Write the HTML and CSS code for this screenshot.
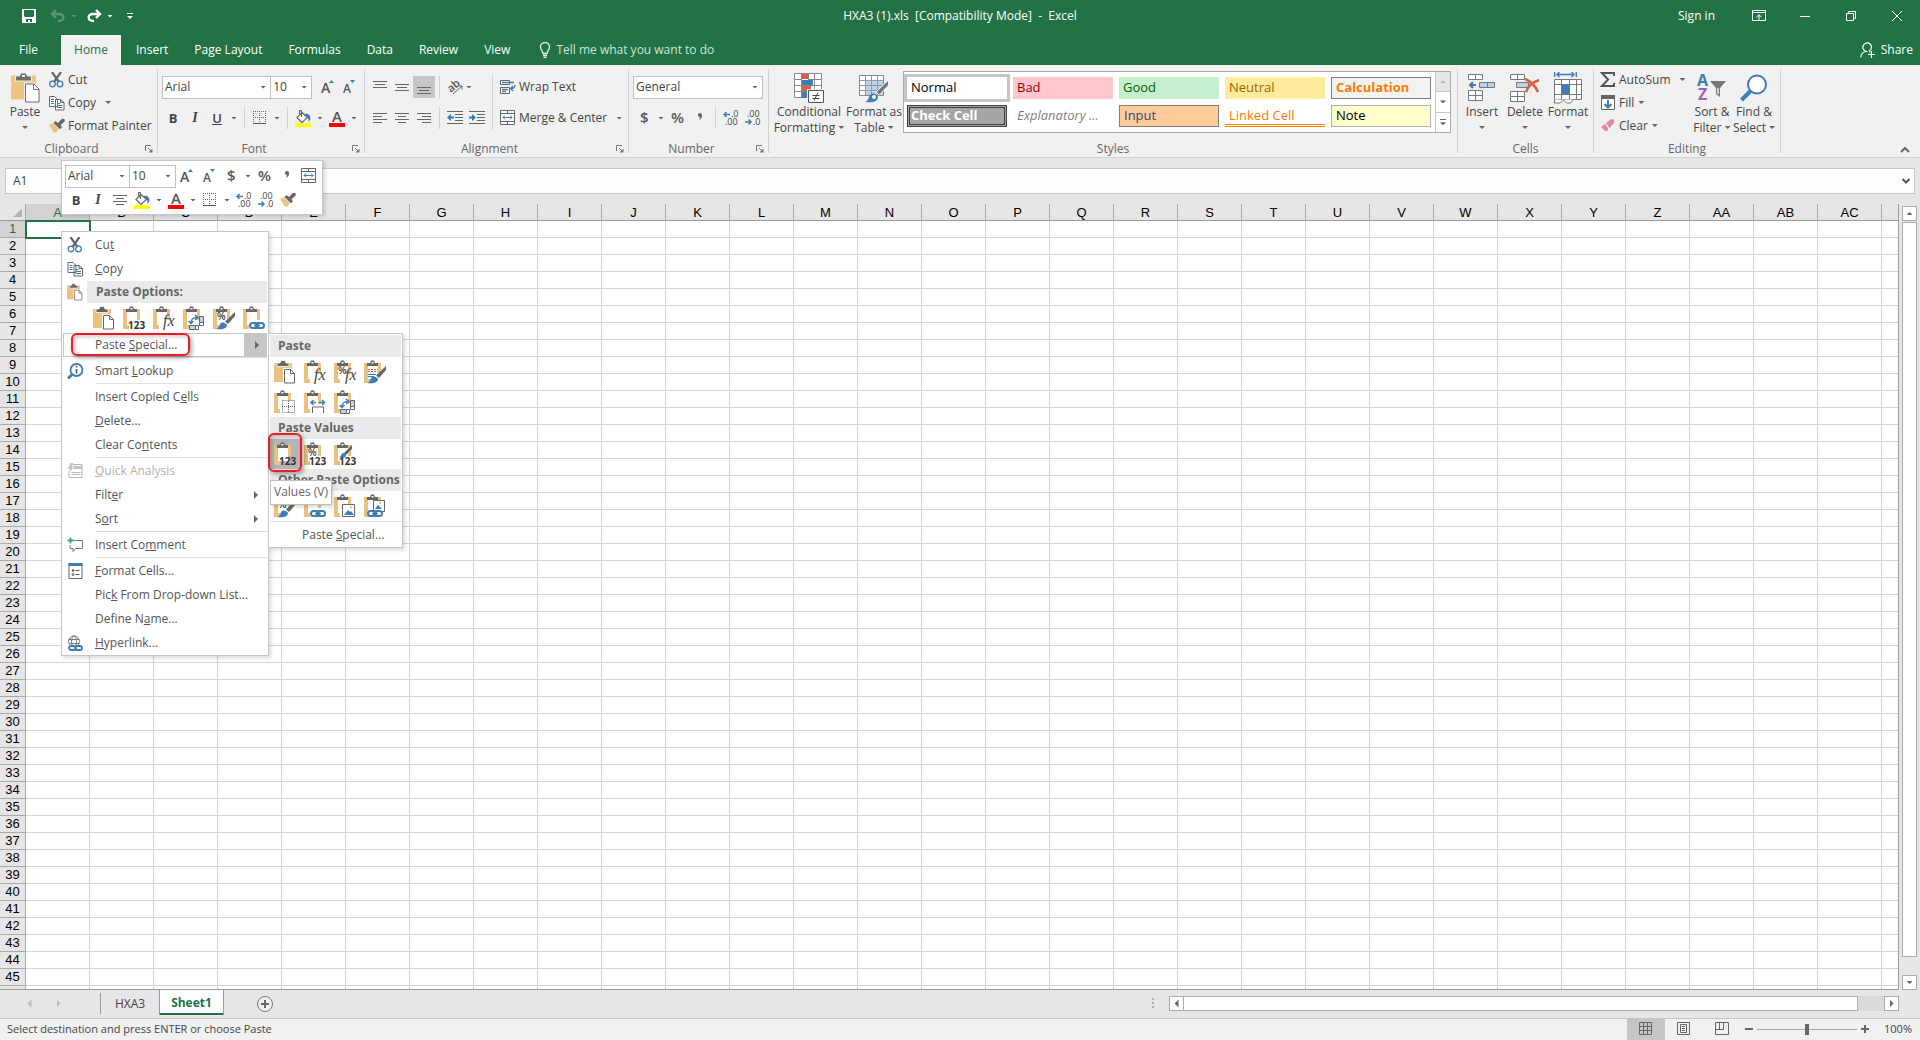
FILE: index.html
```html
<!DOCTYPE html>
<html lang="en">
  <head>
    <meta charset="utf-8">
    <title>HXA3 (1).xls [Compatibility Mode] - Excel</title>
    <link rel="stylesheet" href="styles.css">
  </head>
  <body>
    <svg class="sprite">
      <symbol id="i-save" viewBox="0 0 14 14"><path fill="#fff" fill-rule="evenodd" d="M0 0h14v14H0zM2 1v6l1 1h8l1-1V1zM4 10v3h2v-2h2v2h2v-3z"/></symbol>
      <symbol id="i-undo" viewBox="0 0 16 14"><path fill="none" stroke="#fff" stroke-width="2.4" d="M6 1L2 5l4 4M2 5h7c6 0 6 7-1 7"/></symbol>
      <symbol id="i-redo" viewBox="0 0 16 14"><path fill="none" stroke="#fff" stroke-width="2.4" d="M10 1l4 4-4 4M14 5H7c-6 0-6 7 1 7"/></symbol>
      <symbol id="i-bulb" viewBox="0 0 12 16"><path fill="none" stroke="#e5f0e9" stroke-width="1.3" d="M4 11.5C4 9 1.500 8 1.500 5a4.500 4.500 0 0 1 9 0C10.500 8 8 9 8 11.500zM4 13.500h4M4.500 15.300h3"/></symbol>
      <symbol id="i-share" viewBox="0 0 16 16"><path fill="none" stroke="#fff" stroke-width="1.2" d="M7.500 9.500a4.300 4.300 0 1 1 1.500-.4M6 9.500C3 10 1 12 .7 15.500M9 9.500l1.500.8M8 12.500h7M11.500 9v7"/></symbol>
      <symbol id="i-ribbon-opt" viewBox="0 0 14 12"><path fill="none" stroke="#fff" d="M.5.5h13v10H.5zM0 2.500h14M7 10V5M4.500 7.200L7 4.700l2.500 2.500"/></symbol>
      <symbol id="i-min" viewBox="0 0 10 10"><path stroke="#fff" d="M0 5.500h10"/></symbol>
      <symbol id="i-restore" viewBox="0 0 10 10"><path fill="none" stroke="#fff" d="M.5 2.500h7v7h-7zM2.500 2V.5h7v7H8"/></symbol>
      <symbol id="i-close" viewBox="0 0 10 10"><path stroke="#fff" d="M0 0l10 10M10 0L0 10"/></symbol>

      <symbol id="i-paste-big" viewBox="0 0 29 31">
        <path fill="#edc57f" d="M1 3h23a1 1 0 0 1 1 1v23H1a1 1 0 0 1-1-1V4a1 1 0 0 1 1-1z"/>
        <path fill="#6d6d6d" stroke="#f1f1f1" d="M4.500 8.500v-5h4L10 .5h5l1.500 3h4v5z"/><path fill="#f1f1f1" d="M11 2.500h3v2h-3z"/>
        <path fill="#fff" stroke="#f1f1f1" stroke-width="3" d="M14.500 11.500h9l4.500 5v13.500H14.500z"/>
        <path fill="#fff" stroke="#6d6d6d" d="M14.500 11.500h8.500l5 5v13H14.500zM22.500 11.500v5.500h5.500"/>
      </symbol>
      <symbol id="i-cut" viewBox="0 0 16 16"><path fill="none" stroke="#666" stroke-width="2.200" d="M3 0l7 10M12 0L5 10"/><circle cx="3.500" cy="12" r="2.800" fill="none" stroke="#3e7cb7" stroke-width="1.300"/><circle cx="11" cy="12" r="2.800" fill="none" stroke="#3e7cb7" stroke-width="1.300"/></symbol>
      <symbol id="i-copy" viewBox="0 0 16 16"><path fill="#fff" stroke="#666" d="M.5 1.500h5l3 3v7h-8zM6.500 4.500h5l3.500 3v7.500H6.500zM11.500 4.500v3H15"/><path stroke="#3e7cb7" d="M2 4.500h3M2 6.500h3M2 8.500h3M8 8.500h3M8 10.500h5.500M8 12.500h5.500"/></symbol>
      <symbol id="i-painter" viewBox="0 0 16 16"><path fill="#edc57f" d="M0 7l4-2 6 6-3 4-1-1-1 1z"/><path fill="#666" d="M4.500 5l2-2 2.500 2L13 .8 15.500 1l.3 2.200-4.300 4 1.500 2-2 2z"/></symbol>
      <symbol id="i-launch" viewBox="0 0 8 8"><path fill="none" stroke="#777" d="M.5 6V.5H6M3 3l3.500 3.500"/><path fill="#777" d="M7.500 3.500v4h-4z"/></symbol>
      <symbol id="i-grow" viewBox="0 0 14 16"><text class="svg-letter" x="0" y="14" font-size="14">A</text><path fill="#3e7cb7" d="M8 4l2.500-3L13 4z"/></symbol>
      <symbol id="i-shrink" viewBox="0 0 14 16"><text class="svg-letter" x="1" y="14" font-size="12">A</text><path fill="#3e7cb7" d="M8 1h5l-2.500 3z"/></symbol>
      <symbol id="i-borders" viewBox="0 0 14 14"><path fill="none" stroke="#666" stroke-dasharray="1 1" d="M.5 0v13M6.500 0v13M12.500 0v13M0 .5h13M0 6.500h13"/><path stroke="#555" d="M0 12.500h13"/></symbol>
      <symbol id="i-bucket" viewBox="0 0 16 17"><path fill="#fff" stroke="#666" stroke-width="1.200" d="M7 2.500l5.500 5L7 12.500 2 7.500zM6.500 7V1.500c0-1.500-2-1.500-2 0V4"/><path fill="#3e7cb7" d="M9.500 4c4-1 6 1 6 5l-2 3c0-3 0-4-2-5z"/><path fill="#ff0" d="M0 13h16v4H0z"/></symbol>
      <symbol id="i-fontcolor" viewBox="0 0 16 17"><text class="svg-letter" x="3" y="12" font-size="15">A</text><path fill="#f00" d="M0 13h16v4H0z"/></symbol>
      <symbol id="i-top" viewBox="0 0 14 14"><path stroke="#666" d="M0 1.500h14M2 4.500h10M0 7.500h14"/></symbol>
      <symbol id="i-middle" viewBox="0 0 14 14"><path stroke="#666" d="M0 4.500h14M2 7.500h10M0 10.500h14"/></symbol>
      <symbol id="i-bottom" viewBox="0 0 14 14"><path stroke="#666" d="M0 7.500h14M2 10.500h10M0 13.500h14"/></symbol>
      <symbol id="i-left" viewBox="0 0 14 14"><path stroke="#666" d="M0 2.500h14M0 5.500h9M0 8.500h14M0 11.500h9"/></symbol>
      <symbol id="i-center" viewBox="0 0 14 14"><path stroke="#666" d="M0 2.500h14M3 5.500h8M0 8.500h14M3 11.500h8"/></symbol>
      <symbol id="i-right" viewBox="0 0 14 14"><path stroke="#666" d="M0 2.500h14M5 5.500h9M0 8.500h14M5 11.500h9"/></symbol>
      <symbol id="i-orient" viewBox="0 0 16 16"><text class="svg-letter" x="1" y="12" font-size="11" transform="rotate(-42 5 9)">ab</text><path fill="none" stroke="#666" d="M6 15l9-8M11.500 7H15v3.500"/></symbol>
      <symbol id="i-outdent" viewBox="0 0 16 14"><path stroke="#666" d="M0 .5h16M8 3.500h8M8 6.500h8M8 9.500h8M0 12.500h16"/><path fill="#3e7cb7" d="M0 6.500L4 3v2.500h3v2H4V10z"/></symbol>
      <symbol id="i-indent" viewBox="0 0 16 14"><path stroke="#666" d="M0 .5h16M8 3.500h8M8 6.500h8M8 9.500h8M0 12.500h16"/><path fill="#3e7cb7" d="M7 6.500L3 3v2.500H0v2h3V10z"/></symbol>
      <symbol id="i-wrap" viewBox="0 0 16 16"><path fill="#fff" stroke="#666" d="M.5 1.500h9v4h-9zM.5 8.500h9v6h-9z"/><path fill="none" stroke="#3e7cb7" stroke-width="1.300" d="M2 3.500h12M2 10.500h6M2 12.500h4M15 6c0 3-1 3.500-4 3.500M13 7l-2.500 2.500L13 12"/></symbol>
      <symbol id="i-merge" viewBox="0 0 16 16"><path fill="#fff" stroke="#666" d="M.5.5h14v14H.5zM0 3.500h15M0 11.500h15M7.500 0v4M7.500 11v4"/><path fill="none" stroke="#3e7cb7" d="M3 7.500h9M5 5.500l-2 2 2 2M10 5.500l2 2-2 2"/></symbol>
      <symbol id="i-dollar" viewBox="0 0 14 18"><text class="svg-letter" x="3" y="14" font-size="15">$</text></symbol>
      <symbol id="i-percent" viewBox="0 0 14 18"><text class="svg-letter" x="0" y="14" font-size="15">%</text></symbol>
      <symbol id="i-comma" viewBox="0 0 8 16"><path fill="#666" d="M4 3a2 2 0 0 1 2 2c0 3-1 4-3 5 .8-1.200 1-2 .8-3A2 2 0 0 1 4 3z"/></symbol>
      <symbol id="i-incdec" viewBox="0 0 16 16"><path fill="none" stroke="#3e7cb7" stroke-width="1.500" d="M1 4.500h6M3.500 2L1 4.500 3.500 7"/><text class="svg-num" x="8" y="7">.0</text><text class="svg-num" x="2" y="15">.00</text></symbol>
      <symbol id="i-decdec" viewBox="0 0 16 16"><path fill="none" stroke="#3e7cb7" stroke-width="1.500" d="M0 12h6M3.500 9.500L6 12l-2.500 2.500"/><text class="svg-num" x="2" y="7">.00</text><text class="svg-num" x="8" y="15">.0</text></symbol>

      <symbol id="i-cond" viewBox="0 0 30 30">
        <path fill="#fff" stroke="#888" d="M.5.500h27v24H.5z"/><path fill="#d9603f" d="M8 1h6v5H8zM8 13h9v5H8z"/><path fill="#3e7cb7" d="M8 7h11v5H8zM8 19h5v6H8z"/>
        <path fill="none" stroke="#888" d="M7.500 1v24M.5 6.500h7M.5 12.500h27M.5 18.500h27M14 6.500h13M20.500 1v18M14.500 1v5"/>
        <path fill="#fff" stroke="#f1f1f1" stroke-width="3" d="M14.500 17.500h15v12h-15z"/>
        <path fill="#fff" stroke="#555" d="M14.500 17.500h15v12h-15z"/><path stroke="#444" d="M18.500 22.500h7M18.500 25.500h7M24 19.500l-4 8"/>
      </symbol>
      <symbol id="i-fmttable" viewBox="0 0 30 30">
        <path fill="#fff" stroke="#888" d="M.5 2.500h24v20H.5z"/><path fill="#bcd2ea" d="M7 8h17v14H7z"/><path fill="none" stroke="#999" d="M6.500 3v19M12.500 3v19M18.500 3v19M1 7.500h23M1 12.500h23M1 17.500h23"/>
        <path fill="#777" stroke="#f1f1f1" d="M29.500 7v5l-9 10-3.500-3z"/><path fill="#3e7cb7" d="M6 29c4-1 3-5 5-7 3-3 7-1 8 2 0 5-7 6-13 5z"/><circle cx="15" cy="24" r="2" fill="#fff"/>
      </symbol>
      <symbol id="i-insert" viewBox="0 0 28 30">
        <path fill="#fff" stroke="#777" d="M.5 1.500h14v5H.5zM7.500 1.500v5M.5 17.500h14v10H.5zM7.500 17.500v10M.5 22.500h14"/><path fill="#bcd2ea" stroke="#777" d="M11.500 9.500h15v5h-15zM19.500 9.500v5"/><path fill="none" stroke="#3e7cb7" stroke-width="2" d="M2 12h6M5 9l-3 3 3 3"/>
      </symbol>
      <symbol id="i-delete" viewBox="0 0 30 30">
        <path fill="#fff" stroke="#777" d="M.5 1.500h14v5H.5zM7.500 1.500v5M.5 18.500h14v10H.5zM7.500 18.500v10M.5 23.500h14"/><path fill="#bcd2ea" stroke="#777" d="M6.500 9.500h12v5h-12z"/><path fill="none" stroke="#d9603f" stroke-width="2.600" d="M15 6c5 2 10 6 13 13M29 7c-6 2-11 6-13 12"/>
      </symbol>
      <symbol id="i-format" viewBox="0 0 28 32">
        <path fill="none" stroke="#3e7cb7" stroke-width="1.400" d="M.7 0v5M22.300 0v5M3 2.500h17M5.500 0L3 2.500 5.500 5M17.500 0L20 2.500 17.500 5"/><path fill="#fff" stroke="#777" d="M.5 7.500h27v20H.5zM7.500 7.500v20M15.500 7.500v20M22.500 7.500v20M.5 12.500h27M.5 22.500h27"/><path fill="#3e7cb7" d="M8 13h7v9H8z"/><path fill="#fff" stroke="#777" d="M.5 27.500v3.500h6l3-3 3 3h4l3-3.500"/>
      </symbol>
      <symbol id="i-sigma" viewBox="0 0 16 16"><path fill="none" stroke="#555" stroke-width="2" d="M14 4V1H2l6 6.500L2 14h12v-3"/></symbol>
      <symbol id="i-fill" viewBox="0 0 16 16"><path fill="#fff" stroke="#666" d="M1.500.500h13v14h-13z"/><path fill="#666" d="M1 0h14v4H1z"/><path fill="none" stroke="#3e7cb7" stroke-width="2" d="M8 5v7M4.500 9L8 12.500 11.500 9"/></symbol>
      <symbol id="i-clear" viewBox="0 0 16 16"><path fill="#e8879a" d="M6 5l5-4 3 .5V5l-4.500 5zM5 6l3.500 5-1.500 2H5L1 9z"/></symbol>
      <symbol id="i-sort" viewBox="0 0 30 30"><text x="0" y="13" font-size="16" font-weight="700" fill="#3e7cb7">A</text><text x="1" y="27" font-size="16" font-weight="700" fill="#9b62b8">Z</text><path fill="#777" d="M13 8h16l-6 7v9l-4-3v-6z"/><path stroke="#eee" stroke-width="1.500" d="M21 15v6"/></symbol>
      <symbol id="i-find" viewBox="0 0 28 28"><path stroke="#3e7cb7" stroke-width="4" d="M1.500 26l9-9"/><circle cx="17" cy="10.500" r="9" fill="#fff" stroke="#3e7cb7" stroke-width="2"/></symbol>
      <symbol id="i-chev-up" viewBox="0 0 10 6"><path fill="none" stroke="#666" stroke-width="2" d="M1 5l4-4 4 4"/></symbol>
      <symbol id="i-chev-down" viewBox="0 0 10 6"><path fill="none" stroke="#555" stroke-width="2" d="M1.500 1L5 4.500 8.500 1"/></symbol>

      <!-- paste option icons share one clipboard -->
      <symbol id="clip" viewBox="0 0 22 24"><path fill="#fff" d="M4 5h10v14H4z"/><path fill="#e9c282" d="M0 3h5v3H4v13h2v4H0zM12 3h5v11h-3V6h-2z"/><path fill="#666" d="M3 6V3h3l1-2.500h3L11 3h3v3z"/><path fill="#fff" d="M7.500 2h2v1.500h-2z"/></symbol>
      <symbol id="p-paste" viewBox="0 0 22 24"><path fill="#e9c282" d="M0 3h18v19H0z"/><path fill="#666" stroke="#fff" stroke-width=".8" d="M3 6.500V3h3l1-2.500h4L12 3h3v3.500z"/><path fill="#fff" d="M9 8h13v16H9z"/><path fill="#fff" stroke="#666" d="M10.500 9.500h6l4 4v9.500h-10zM16.500 9.500v4h4"/></symbol>
      <symbol id="p-values" viewBox="0 0 22 24"><use href="#clip"/><text class="svg-123" x="5" y="23">123</text></symbol>
      <symbol id="p-fx" viewBox="0 0 22 24"><use href="#clip"/><text class="svg-fx" x="10" y="20">fx</text></symbol>
      <symbol id="p-pfx" viewBox="0 0 22 24"><use href="#clip"/><text class="svg-pct" x="4" y="14">%</text><text class="svg-fx" x="11" y="20">fx</text></symbol>
      <symbol id="p-transpose" viewBox="0 0 22 24"><use href="#clip"/><path fill="#bcd2ea" stroke="#666" d="M16.500 10.500h4v6h-4zM6.500 19.500h6v4h-6z"/><path fill="#fff" stroke="#666" d="M16.500 16.500h4v3h-4zM12.500 19.500h3v4h-3z"/><path fill="none" stroke="#3e7cb7" stroke-width="1.500" d="M8 17.500c0-5 2-6 6-6M12 9l3 2.500-3 2.500M5.500 15L8 17.500l2.500-2.500"/></symbol>
      <symbol id="brush" viewBox="0 0 22 24"><path fill="#666" d="M22 6v4l-7 8-3-2.500z"/><path fill="#3e7cb7" d="M3 23c3 0 3-4 5-6 2-1 5 0 6 2 0 4-6 5-11 4z"/></symbol>
      <symbol id="p-format" viewBox="0 0 22 24"><use href="#clip"/><text class="svg-pct" x="4" y="14">%</text><use href="#brush"/></symbol>
      <symbol id="link" viewBox="0 0 22 24"><rect x="7" y="17" width="8" height="5" rx="2.500" fill="#fff" stroke="#3e7cb7" stroke-width="2"/><rect x="13" y="17" width="8" height="5" rx="2.500" fill="none" stroke="#3e7cb7" stroke-width="2"/><path stroke="#3e7cb7" stroke-width="1.500" d="M11 19.500h6"/></symbol>
      <symbol id="p-link" viewBox="0 0 22 24"><use href="#clip"/><use href="#link"/></symbol>
      <symbol id="p-source" viewBox="0 0 22 24"><use href="#clip"/><path stroke="#d9603f" stroke-dasharray="2 1" d="M4 9.500h10M4 11.500h10"/><path stroke="#3e7cb7" d="M4 14.500h8M4 16.500h6"/><use href="#brush"/></symbol>
      <symbol id="p-noborder" viewBox="0 0 22 24"><use href="#clip"/><path fill="#fff" stroke="#666" stroke-dasharray="1 1" d="M8.500 10.500h12v12h-12zM14.500 11v12M8 16.500h13"/></symbol>
      <symbol id="p-width" viewBox="0 0 22 24"><use href="#clip"/><path fill="#fff" stroke="#666" d="M8.500 23v-6h11v6"/><path fill="none" stroke="#3e7cb7" stroke-width="1.500" d="M7 12.500h5M9.500 10L7 12.500 9.500 15M15 12.500h5M18 10l2.500 2.500L18 15"/></symbol>
      <symbol id="p-numvalues" viewBox="0 0 22 24"><use href="#clip"/><text class="svg-pct" x="4" y="14">%</text><text class="svg-123" x="5" y="23">123</text></symbol>
      <symbol id="p-fmtvalues" viewBox="0 0 22 24"><use href="#clip"/><path fill="#666" d="M18 3v4l-6 6-2-2z"/><path fill="#3e7cb7" d="M5 15c2 0 2-3 4-4 2 0 3 1 3 3-1 2-4 2-7 1z"/><text class="svg-123" x="5" y="23">123</text></symbol>
      <symbol id="p-picture" viewBox="0 0 22 24"><use href="#clip"/><path fill="#fff" stroke="#666" d="M8.500 10.500h12v12h-12z"/><path fill="#3e7cb7" d="M10 21l4-5 2 2 1-1 3 4z"/><path fill="#edc57f" d="M16 12h2v2h-2z"/></symbol>
      <symbol id="p-linkpic" viewBox="0 0 22 24"><use href="#clip"/><path fill="#fff" stroke="#666" d="M9.500 6.500h11v11h-11z"/><path fill="#edc57f" d="M15 8h2v2h-2z"/><path fill="#3e7cb7" d="M11 15l3-4 4 4z"/><g transform="translate(-3 0)"><use href="#link"/></g></symbol>

      <symbol id="i-lookup" viewBox="0 0 17 17"><circle cx="9.500" cy="7" r="6" fill="#fff" stroke="#3e7cb7" stroke-width="1.800"/><path stroke="#3e7cb7" stroke-width="2.600" d="M1 15.500l4-4"/><path stroke="#555" stroke-width="1.600" d="M9.500 3v1.600M9.500 6v4.500"/></symbol>
      <symbol id="i-quick" viewBox="0 0 16 16"><path fill="#fff" stroke="#b5b5b5" d="M5.500 1.500h9v13h-13v-6"/><path fill="#c4c4c4" d="M5 3h10v3H5zM3 0L0 6h3l-2 4 6-6H4l2-4z"/><path stroke="#b5b5b5" d="M4 9.500h9M4 11.500h9"/></symbol>
      <symbol id="i-comment" viewBox="0 0 16 16"><path fill="none" stroke="#777" d="M6 3.500h9v8H8l-2.500 3v-3h-3V8"/><path stroke="#4e9a7c" stroke-width="1.800" d="M0 3.500h6M3 .5v6"/></symbol>
      <symbol id="i-cells" viewBox="0 0 16 16"><path fill="#fff" stroke="#666" d="M1.500.500h13v15h-13z"/><path fill="#3e7cb7" d="M1 0h14v3H1z"/><path fill="none" stroke="#555" d="M8 7.500h4M8 11.500h4"/><circle cx="5.500" cy="7.500" r="1.300" fill="#555"/><circle cx="5.500" cy="11.500" r="1" fill="none" stroke="#555"/></symbol>
      <symbol id="i-hyper" viewBox="0 0 17 17"><g fill="none" stroke="#777"><circle cx="7" cy="6.500" r="5.500"/><ellipse cx="7" cy="6.500" rx="2.500" ry="5.500"/><path d="M2 4.500h10M2 8.500h10"/></g><path fill="#fff" d="M2 10h14v7H2z"/><g fill="none" stroke="#3e7cb7" stroke-width="1.800"><rect x="2" y="11" width="7" height="4" rx="2"/><rect x="8" y="11" width="7" height="4" rx="2"/></g></symbol>
      <symbol id="i-plus" viewBox="0 0 18 18"><circle cx="9" cy="9" r="7.500" fill="#eee" stroke="#777"/><path stroke="#666" stroke-width="2" d="M5 9h8M9 5v8"/></symbol>
      <symbol id="i-v-normal" viewBox="0 0 14 14"><path fill="none" stroke="#666" d="M.5.500h12v12H.5zM4.500.500v12M8.500.500v12M.5 4.500h12M.5 8.500h12"/></symbol>
      <symbol id="i-v-page" viewBox="0 0 14 14"><path fill="none" stroke="#666" d="M.5.500h12v12H.5zM3.500 2.500h6v8h-6zM5 4.500h3M5 6.500h3M5 8.500h3"/></symbol>
      <symbol id="i-v-break" viewBox="0 0 14 14"><path fill="none" stroke="#666" d="M.5.500h13v12H.5zM4.500.500v7M8.500.500v7M.5 7.500h8"/></symbol>
    </svg>

    <header class="titlebar">
      <div class="quick">
        <button aria-label="Save"><svg width="14" height="14"><use href="#i-save"/></svg></button>
        <button class="faded" aria-label="Undo"><svg width="16" height="14"><use href="#i-undo"/></svg><i class="caret"></i></button>
        <button aria-label="Redo"><svg width="16" height="14"><use href="#i-redo"/></svg><i class="caret"></i></button>
        <button class="customize" aria-label="Customize"><i class="caret"></i></button>
      </div>
      <div class="doc-title">HXA3 (1).xls  [Compatibility Mode]  -  Excel</div>
      <div class="window-tools">
        <a class="signin" href="#">Sign in</a>
        <button aria-label="Ribbon options"><svg width="14" height="12"><use href="#i-ribbon-opt"/></svg></button>
        <button aria-label="Minimize"><svg width="10" height="10"><use href="#i-min"/></svg></button>
        <button aria-label="Restore"><svg width="10" height="10"><use href="#i-restore"/></svg></button>
        <button aria-label="Close"><svg width="10" height="10"><use href="#i-close"/></svg></button>
      </div>
    </header>

    <nav class="tabs">
      <button class="file">File</button>
      <button class="active">Home</button>
      <button>Insert</button>
      <button>Page Layout</button>
      <button>Formulas</button>
      <button>Data</button>
      <button>Review</button>
      <button>View</button>
      <button class="tell"><svg width="12" height="16"><use href="#i-bulb"/></svg>Tell me what you want to do</button>
      <button class="share"><svg width="16" height="16"><use href="#i-share"/></svg>Share</button>
    </nav>

    <section class="ribbon">
      <div class="group clipboard">
        <div class="group-body">
          <button class="big paste"><svg width="29" height="31"><use href="#i-paste-big"/></svg><span>Paste</span><i class="caret"></i></button>
          <div class="stack">
            <button class="line"><svg width="16" height="16"><use href="#i-cut"/></svg>Cut</button>
            <button class="line"><svg width="16" height="16"><use href="#i-copy"/></svg>Copy<i class="caret far"></i></button>
            <button class="line"><svg width="16" height="16"><use href="#i-painter"/></svg>Format Painter</button>
          </div>
        </div>
        <div class="group-foot"><span>Clipboard</span><button aria-label="Clipboard settings"><svg width="8" height="8"><use href="#i-launch"/></svg></button></div>
      </div>

      <div class="group font">
        <div class="group-body rows">
          <div class="row">
            <label class="combo face"><select aria-label="Font"><option>Arial</option></select><i class="caret"></i></label>
            <label class="combo size"><select aria-label="Font size"><option>10</option></select><i class="caret"></i></label>
            <button class="tool" aria-label="Increase font size"><svg width="14" height="16"><use href="#i-grow"/></svg></button>
            <button class="tool" aria-label="Decrease font size"><svg width="14" height="16"><use href="#i-shrink"/></svg></button>
          </div>
          <div class="row">
            <button class="tool bold">B</button>
            <button class="tool italic">I</button>
            <button class="tool underline">U</button><i class="caret slot"></i>
            <i class="sep"></i>
            <button class="tool" aria-label="Borders"><svg width="14" height="14"><use href="#i-borders"/></svg></button><i class="caret slot"></i>
            <i class="sep"></i>
            <button class="tool" aria-label="Fill color"><svg width="16" height="17"><use href="#i-bucket"/></svg></button><i class="caret slot"></i>
            <button class="tool" aria-label="Font color"><svg width="16" height="17"><use href="#i-fontcolor"/></svg></button><i class="caret slot"></i>
          </div>
        </div>
        <div class="group-foot"><span>Font</span><button aria-label="Font settings"><svg width="8" height="8"><use href="#i-launch"/></svg></button></div>
      </div>

      <div class="group alignment">
        <div class="group-body">
          <div class="rows">
            <div class="row">
              <button class="tool" aria-label="Top align"><svg width="14" height="14"><use href="#i-top"/></svg></button>
              <button class="tool" aria-label="Middle align"><svg width="14" height="14"><use href="#i-middle"/></svg></button>
              <button class="tool on" aria-label="Bottom align"><svg width="14" height="14"><use href="#i-bottom"/></svg></button>
              <i class="sep"></i>
              <button class="tool" aria-label="Orientation"><svg width="16" height="16"><use href="#i-orient"/></svg></button><i class="caret"></i>
            </div>
            <div class="row">
              <button class="tool" aria-label="Align left"><svg width="14" height="14"><use href="#i-left"/></svg></button>
              <button class="tool" aria-label="Center"><svg width="14" height="14"><use href="#i-center"/></svg></button>
              <button class="tool" aria-label="Align right"><svg width="14" height="14"><use href="#i-right"/></svg></button>
              <i class="sep"></i>
              <button class="tool" aria-label="Decrease indent"><svg width="16" height="14"><use href="#i-outdent"/></svg></button>
              <button class="tool" aria-label="Increase indent"><svg width="16" height="14"><use href="#i-indent"/></svg></button>
            </div>
          </div>
          <i class="sep tall"></i>
          <div class="rows wraps">
            <button class="line"><svg width="16" height="16"><use href="#i-wrap"/></svg>Wrap Text</button>
            <button class="line"><svg width="16" height="16"><use href="#i-merge"/></svg>Merge &amp; Center<i class="caret far"></i></button>
          </div>
        </div>
        <div class="group-foot"><span>Alignment</span><button aria-label="Alignment settings"><svg width="8" height="8"><use href="#i-launch"/></svg></button></div>
      </div>

      <div class="group number">
        <div class="group-body rows">
          <div class="row">
            <label class="combo format"><select aria-label="Number format"><option>General</option></select><i class="caret"></i></label>
          </div>
          <div class="row">
            <button class="tool" aria-label="Currency"><svg width="14" height="18"><use href="#i-dollar"/></svg></button><i class="caret slot"></i>
            <button class="tool" aria-label="Percent"><svg width="14" height="18"><use href="#i-percent"/></svg></button>
            <button class="tool" aria-label="Comma style"><svg width="8" height="16"><use href="#i-comma"/></svg></button>
            <i class="sep"></i>
            <button class="tool" aria-label="Increase decimal"><svg width="16" height="16"><use href="#i-incdec"/></svg></button>
            <button class="tool" aria-label="Decrease decimal"><svg width="16" height="16"><use href="#i-decdec"/></svg></button>
          </div>
        </div>
        <div class="group-foot"><span>Number</span><button aria-label="Number settings"><svg width="8" height="8"><use href="#i-launch"/></svg></button></div>
      </div>

      <div class="group styles">
        <div class="group-body">
          <button class="big cond"><svg width="30" height="30"><use href="#i-cond"/></svg><span>Conditional<br>Formatting <i class="caret"></i></span></button>
          <button class="big astable"><svg width="30" height="30"><use href="#i-fmttable"/></svg><span>Format as<br>Table <i class="caret"></i></span></button>
          <div class="gallery">
            <div class="swatches">
              <button class="normal">Normal</button>
              <button class="bad">Bad</button>
              <button class="good">Good</button>
              <button class="neutral">Neutral</button>
              <button class="calc">Calculation</button>
              <button class="check">Check Cell</button>
              <button class="expl">Explanatory ...</button>
              <button class="input">Input</button>
              <button class="linked">Linked Cell</button>
              <button class="note">Note</button>
            </div>
            <div class="gallery-nav">
              <button class="off" aria-label="Previous styles"><i class="caret up"></i></button>
              <button aria-label="Next styles"><i class="caret"></i></button>
              <button class="more" aria-label="More styles"><i class="caret"></i></button>
            </div>
          </div>
        </div>
        <div class="group-foot"><span>Styles</span></div>
      </div>

      <div class="group cells">
        <div class="group-body">
          <button class="big"><svg width="28" height="30"><use href="#i-insert"/></svg><span>Insert</span><i class="caret"></i></button>
          <button class="big"><svg width="30" height="30"><use href="#i-delete"/></svg><span>Delete</span><i class="caret"></i></button>
          <button class="big"><svg width="28" height="32"><use href="#i-format"/></svg><span>Format</span><i class="caret"></i></button>
        </div>
        <div class="group-foot"><span>Cells</span></div>
      </div>

      <div class="group editing">
        <div class="group-body">
          <div class="stack">
            <button class="line"><svg width="16" height="16"><use href="#i-sigma"/></svg>AutoSum<i class="caret far"></i></button>
            <button class="line"><svg width="16" height="16"><use href="#i-fill"/></svg>Fill<i class="caret"></i></button>
            <button class="line"><svg width="16" height="16"><use href="#i-clear"/></svg>Clear<i class="caret"></i></button>
          </div>
          <button class="big"><svg width="30" height="30"><use href="#i-sort"/></svg><span>Sort &amp;<br>Filter <i class="caret"></i></span></button>
          <button class="big"><svg width="28" height="28"><use href="#i-find"/></svg><span>Find &amp;<br>Select <i class="caret"></i></span></button>
        </div>
        <div class="group-foot"><span>Editing</span></div>
      </div>
      <button class="collapse" aria-label="Collapse ribbon"><svg width="10" height="6"><use href="#i-chev-up"/></svg></button>
    </section>

    <div class="formula-bar">
      <input class="name-box" aria-label="Name box" value="A1">
      <div class="formula"><input aria-label="Formula"><svg width="10" height="6"><use href="#i-chev-down"/></svg></div>
    </div>

    <main class="workspace">
      <div class="grid-view"><table class="grid"></table></div>
      <div class="vscroll">
        <button aria-label="Scroll up"><i class="caret up"></i></button>
        <div class="thumb"></div>
        <button aria-label="Scroll down"><i class="caret"></i></button>
      </div>
    </main>

    <div class="sheet-bar">
      <button class="nav" aria-label="Previous sheet"><i class="arrow left"></i></button>
      <button class="nav" aria-label="Next sheet"><i class="arrow"></i></button>
      <button class="sheet first">HXA3</button>
      <button class="sheet active">Sheet1</button>
      <button class="add" aria-label="New sheet"><svg width="18" height="18"><use href="#i-plus"/></svg></button>
      <i class="grip"></i>
      <div class="hscroll">
        <button aria-label="Scroll left"><i class="arrow left"></i></button>
        <div class="thumb"></div>
        <button aria-label="Scroll right"><i class="arrow"></i></button>
      </div>
    </div>

    <footer class="status">
      <span class="message">Select destination and press ENTER or choose Paste</span>
      <button class="view on" aria-label="Normal view"><svg width="14" height="14"><use href="#i-v-normal"/></svg></button>
      <button class="view" aria-label="Page layout"><svg width="14" height="14"><use href="#i-v-page"/></svg></button>
      <button class="view" aria-label="Page break preview"><svg width="14" height="14"><use href="#i-v-break"/></svg></button>
      <button class="zoom-step minus" aria-label="Zoom out"></button>
      <input class="zoom" type="range" min="0" max="100" value="50" aria-label="Zoom">
      <button class="zoom-step plus" aria-label="Zoom in"></button>
      <span class="zoom-value">100%</span>
    </footer>

    <div class="mini-toolbar">
      <div class="row">
        <label class="combo mini-face"><select aria-label="Font"><option>Arial</option></select><i class="caret"></i></label>
        <label class="combo mini-size"><select aria-label="Font size"><option>10</option></select><i class="caret"></i></label>
        <button class="tool" aria-label="Increase font size"><svg width="14" height="16"><use href="#i-grow"/></svg></button>
        <button class="tool" aria-label="Decrease font size"><svg width="14" height="16"><use href="#i-shrink"/></svg></button>
        <button class="tool" aria-label="Currency"><svg width="14" height="18"><use href="#i-dollar"/></svg></button><i class="caret slot"></i>
        <button class="tool" aria-label="Percent"><svg width="14" height="18"><use href="#i-percent"/></svg></button>
        <button class="tool" aria-label="Comma style"><svg width="8" height="16"><use href="#i-comma"/></svg></button>
        <button class="tool" aria-label="Merge"><svg width="16" height="16"><use href="#i-merge"/></svg></button>
      </div>
      <div class="row">
        <button class="tool bold">B</button>
        <button class="tool italic">I</button>
        <button class="tool" aria-label="Center"><svg width="14" height="14"><use href="#i-center"/></svg></button>
        <button class="tool" aria-label="Fill color"><svg width="16" height="17"><use href="#i-bucket"/></svg></button><i class="caret slot"></i>
        <button class="tool" aria-label="Font color"><svg width="16" height="17"><use href="#i-fontcolor"/></svg></button><i class="caret slot"></i>
        <button class="tool" aria-label="Borders"><svg width="14" height="14"><use href="#i-borders"/></svg></button><i class="caret slot"></i>
        <button class="tool" aria-label="Increase decimal"><svg width="16" height="16"><use href="#i-incdec"/></svg></button>
        <button class="tool" aria-label="Decrease decimal"><svg width="16" height="16"><use href="#i-decdec"/></svg></button>
        <button class="tool" aria-label="Format painter"><svg width="16" height="16"><use href="#i-painter"/></svg></button>
      </div>
    </div>

    <div class="menu context-menu">
      <button class="item"><svg width="16" height="16"><use href="#i-cut"/></svg><span>Cu<u>t</u></span></button>
      <button class="item"><svg width="16" height="16"><use href="#i-copy"/></svg><span><u>C</u>opy</span></button>
      <div class="heading with-icon"><svg width="16" height="18"><use href="#p-paste"/></svg><span>Paste Options:</span></div>
      <div class="paste-row">
        <button aria-label="Paste"><svg width="22" height="24"><use href="#p-paste"/></svg></button>
        <button aria-label="Values"><svg width="22" height="24"><use href="#p-values"/></svg></button>
        <button aria-label="Formulas"><svg width="22" height="24"><use href="#p-fx"/></svg></button>
        <button aria-label="Transpose"><svg width="22" height="24"><use href="#p-transpose"/></svg></button>
        <button aria-label="Formatting"><svg width="22" height="24"><use href="#p-format"/></svg></button>
        <button aria-label="Paste link"><svg width="22" height="24"><use href="#p-link"/></svg></button>
      </div>
      <div class="has-submenu">
        <button class="item open"><span>Paste <u>S</u>pecial...</span><i class="arrow"></i></button>
        <i class="marker"></i>
        <div class="menu submenu">
          <div class="heading">Paste</div>
          <div class="paste-row">
            <button aria-label="Paste"><svg width="22" height="24"><use href="#p-paste"/></svg></button>
            <button aria-label="Formulas"><svg width="22" height="24"><use href="#p-fx"/></svg></button>
            <button aria-label="Formulas and number formatting"><svg width="22" height="24"><use href="#p-pfx"/></svg></button>
            <button aria-label="Keep source formatting"><svg width="22" height="24"><use href="#p-source"/></svg></button>
            <button aria-label="No borders"><svg width="22" height="24"><use href="#p-noborder"/></svg></button>
            <button aria-label="Keep column widths"><svg width="22" height="24"><use href="#p-width"/></svg></button>
            <button aria-label="Transpose"><svg width="22" height="24"><use href="#p-transpose"/></svg></button>
          </div>
          <div class="heading">Paste Values</div>
          <div class="paste-row">
            <button class="picked" aria-label="Values"><svg width="22" height="24"><use href="#p-values"/></svg><i class="marker"></i><span class="tooltip">Values (V)</span></button>
            <button aria-label="Values and number formatting"><svg width="22" height="24"><use href="#p-numvalues"/></svg></button>
            <button aria-label="Values and source formatting"><svg width="22" height="24"><use href="#p-fmtvalues"/></svg></button>
          </div>
          <div class="heading">Other Paste Options</div>
          <div class="paste-row">
            <button aria-label="Formatting"><svg width="22" height="24"><use href="#p-format"/></svg></button>
            <button aria-label="Paste link"><svg width="22" height="24"><use href="#p-link"/></svg></button>
            <button aria-label="Picture"><svg width="22" height="24"><use href="#p-picture"/></svg></button>
            <button aria-label="Linked picture"><svg width="22" height="24"><use href="#p-linkpic"/></svg></button>
          </div>
          <hr>
          <button class="item"><span>Paste <u>S</u>pecial...</span></button>
        </div>
      </div>
      <hr>
      <button class="item"><svg width="17" height="17"><use href="#i-lookup"/></svg><span>Smart <u>L</u>ookup</span></button>
      <hr>
      <button class="item"><span>Insert Copied C<u>e</u>lls</span></button>
      <button class="item"><span><u>D</u>elete...</span></button>
      <button class="item"><span>Clear Co<u>n</u>tents</span></button>
      <hr>
      <button class="item" disabled><svg width="16" height="16"><use href="#i-quick"/></svg><span><u>Q</u>uick Analysis</span></button>
      <button class="item"><span>Filt<u>e</u>r</span><i class="arrow"></i></button>
      <button class="item"><span>S<u>o</u>rt</span><i class="arrow"></i></button>
      <hr>
      <button class="item"><svg width="16" height="16"><use href="#i-comment"/></svg><span>Insert Co<u>m</u>ment</span></button>
      <hr>
      <button class="item"><svg width="16" height="16"><use href="#i-cells"/></svg><span><u>F</u>ormat Cells...</span></button>
      <button class="item"><span>Pic<u>k</u> From Drop-down List...</span></button>
      <button class="item"><span>Define N<u>a</u>me...</span></button>
      <button class="item"><svg width="17" height="17"><use href="#i-hyper"/></svg><span><u>H</u>yperlink...</span></button>
    </div>

    <script src="grid.js"></script>
  </body>
</html>
```
FILE: styles.css
```css
* {
  box-sizing: border-box;
}

html, body {
  height: 100%;
  margin: 0;
  padding: 0;
}

body {
  display: flex;
  flex-direction: column;
  overflow: hidden;
  background: #e6e6e6;
  color: #444;
  font-family: "Open Sans", "Noto Sans", sans-serif;
  font-size: 12px;
  line-height: 16px;
}

button, input, select {
  margin: 0;
  padding: 0;
  border: 0;
  background: none;
  color: inherit;
  font: inherit;
}

button {
  display: flex;
  align-items: center;
  justify-content: center;
  white-space: nowrap;
}

svg {
  display: block;
  flex: none;
}

.sprite {
  display: none;
}

.svg-letter {
  fill: #555;
  font-weight: 600;
}

.svg-num {
  fill: #444;
  font-size: 9px;
}

.svg-123 {
  fill: #333;
  font-size: 10px;
  font-weight: 700;
}

.svg-pct {
  fill: #444;
  font-size: 10px;
  font-weight: 600;
}

.svg-fx {
  fill: #444;
  font-family: "Liberation Serif", serif;
  font-size: 16px;
  font-style: italic;
}

.caret {
  flex: none;
  display: inline-block;
  width: 6px;
  height: 3px;
  background: #666;
  clip-path: polygon(0 0, 100% 0, 50% 100%);
}

.caret.up {
  clip-path: polygon(0 100%, 100% 100%, 50% 0);
}

.caret.slot {
  margin: 0 3px;
}

.arrow {
  flex: none;
  width: 4px;
  height: 8px;
  background: #666;
  clip-path: polygon(0 0, 100% 50%, 0 100%);
}

.arrow.left {
  clip-path: polygon(100% 0, 0 50%, 100% 100%);
}

/* title bar */

.titlebar {
  display: grid;
  grid-template-columns: 1fr auto 1fr;
  align-items: center;
  height: 35px;
  padding-bottom: 3px;
  background: #217346;
  color: #fff;
}

.titlebar .caret {
  background: #fff;
}

.quick {
  display: flex;
  gap: 14px;
  padding-left: 22px;
}

.quick button {
  gap: 5px;
}

.quick .faded {
  opacity: .25;
}

.quick .faded + button {
  margin-left: -5px;
}

.quick .customize {
  flex-direction: column;
  gap: 2px;
}

.customize::before {
  content: "";
  width: 6px;
  height: 1px;
  background: #fff;
}

.doc-title {
  white-space: pre;
}

.window-tools {
  display: flex;
  justify-content: flex-end;
  align-items: center;
}

.window-tools button {
  width: 46px;
  height: 30px;
}

.signin {
  margin-right: 21px;
  color: #fff;
  text-decoration: none;
}

/* ribbon tabs */

.tabs {
  display: flex;
  height: 30px;
  padding-right: 7px;
  background: #217346;
  color: #fff;
}

.tabs button {
  padding: 0 13px;
}

.tabs .file {
  width: 61px;
  padding: 0 4px 0 0;
}

.tabs .active {
  width: 60px;
  margin-right: 2px;
  background: #f1f1f1;
  color: #217346;
}

.tabs .tell {
  gap: 5px;
  padding-left: 16px;
  color: #cfe3d7;
}

.tabs .share {
  gap: 5px;
  margin-left: auto;
  padding: 0;
}

/* ribbon */

.ribbon {
  display: flex;
  height: 93px;
  padding-top: 4px;
  border-bottom: 1px solid #d2d2d2;
  background: #f1f1f1;
}

.group {
  display: flex;
  flex: none;
  flex-direction: column;
  height: 84px;
  padding: 0 4px;
  border-right: 1px solid #d2d2d2;
}

.group-body {
  display: flex;
  flex: 1;
}

.group-foot {
  display: flex;
  align-items: center;
  height: 16px;
  margin-bottom: -4px;
  color: #666;
}

.group-foot span {
  flex: 1;
  text-align: center;
}

.group-foot button {
  justify-content: flex-end;
  width: 14px;
}

.clipboard { width: 158px; }
.font { width: 207px; }
.alignment { width: 264px; }
.number { width: 140px; }
.styles { width: 689px; }
.cells { width: 136px; }
.editing { width: 187px; }

.rows {
  display: flex;
  flex-direction: column;
  gap: 9px;
  padding-top: 7px;
}

.row {
  display: flex;
  align-items: center;
  height: 22px;
}

.tool {
  width: 22px;
  height: 22px;
}

.tool.on {
  background: #c6c6c6;
}

.bold {
  font-size: 13px;
  font-weight: 700;
}

.italic {
  font-family: "Liberation Serif", serif;
  font-size: 14px;
  font-style: italic;
  font-weight: 700;
}

.underline {
  font-size: 13px;
  font-weight: 600;
  text-decoration: underline;
}

.sep {
  flex: none;
  width: 1px;
  height: 22px;
  margin: 0 4px;
  background: #d2d2d2;
}

.sep.tall {
  height: 55px;
  margin-top: 6px;
}

.combo {
  display: flex;
  align-items: center;
  height: 23px;
  padding: 0 4px 0 2px;
  border: 1px solid #c0c0c0;
  background: #fff;
}

.combo + .combo {
  margin-left: -1px;
}

.combo select {
  flex: 1;
  width: 0;
  min-width: 0;
  height: 20px;
  appearance: none;
}

.face { width: 112px; }
.size { width: 43px; margin-right: 5px; }
.format { flex: 1; margin-right: 1px; }
.mini-face { width: 65px; }
.mini-size { width: 47px; }

.line {
  justify-content: flex-start;
  gap: 3px;
  height: 23px;
}

.line .caret {
  margin-left: 1px;
}

.line .caret.far {
  margin-left: 6px;
}

.wraps .line {
  height: 22px;
}

.stack {
  display: flex;
  flex: none;
  flex-direction: column;
  margin-top: -1px;
}

.big {
  flex-direction: column;
  justify-content: flex-start;
  height: 64px;
  padding-top: 3px;
}

.big svg {
  height: 32px;
}

.big .caret {
  margin-top: 6px;
}

.big span .caret {
  margin: 0 0 3px;
}

.paste {
  width: 42px;
}

.clipboard .stack {
  width: 100px;
  padding-left: 3px;
}

.wraps {
  padding-left: 3px;
}

.cond {
  width: 72px;
}

.astable {
  width: 58px;
}

.gallery {
  display: flex;
  height: 62px;
  margin: 2px 0 0;
  border: 1px solid #ababab;
  background: #fff;
}

.swatches {
  display: grid;
  grid-template-columns: repeat(5, 100px);
  grid-template-rows: 22px 22px;
  gap: 6px;
  padding: 5px 4px 5px 3px;
  font-size: 13px;
}

.swatches button {
  justify-content: flex-start;
  padding: 0 0 2px 4px;
}

.normal { color: #000; outline: 3px solid #c6c6c6; }
.bad { background: #ffc7ce; color: #9c0006; }
.good { background: #c6efce; color: #006100; }
.neutral { background: #ffeb9c; color: #9c6500; }

.swatches .calc {
  border: 1px solid #7f7f7f;
  background: #f2f2f2;
  color: #fa7d00;
  font-weight: 700;
}

.swatches .check {
  padding-left: 1px;
  border: 3px double #3f3f3f;
  background: #a5a5a5;
  color: #fff;
  font-weight: 700;
}

.swatches .expl {
  color: #7f7f7f;
  font-style: italic;
}

.swatches .input {
  border: 1px solid #7f7f7f;
  background: #ffcc99;
  color: #3f3f76;
}

.swatches .linked {
  padding-bottom: 0;
  border-bottom: 3px double #ff8001;
  color: #fa7d00;
}

.swatches .note {
  border: 1px solid #b2b2b2;
  background: #ffffcc;
  color: #000;
}

.gallery-nav {
  display: flex;
  flex-direction: column;
  width: 15px;
  border-left: 1px solid #c6c6c6;
}

.gallery-nav button {
  flex: 1;
  flex-direction: column;
  gap: 2px;
}

.gallery-nav button + button {
  border-top: 1px solid #c6c6c6;
}

.gallery-nav .off {
  background: #e6e6e6;
}

.off .caret {
  background: #b5b5b5;
}

.more::before {
  content: "";
  width: 6px;
  height: 1px;
  background: #666;
}

.cells .group-body {
  gap: 3px;
}

.cells .big {
  width: 40px;
}

.editing .group-body {
  padding-left: 2px;
}

.editing .stack {
  width: 91px;
}

.editing .big {
  width: 42px;
}

.collapse {
  align-self: flex-end;
  width: 30px;
  height: 14px;
  margin-left: auto;
}

/* formula bar */

.formula-bar {
  display: flex;
  gap: 20px;
  height: 46px;
  padding: 10px 5px;
}

.name-box {
  width: 110px;
  padding: 0 7px;
  border: 1px solid #c6c6c6;
  background: #fdfdfd;
}

.formula {
  display: flex;
  flex: 1;
  align-items: center;
  padding-right: 3px;
  border: 1px solid #c6c6c6;
  background: #fdfdfd;
}

.formula input {
  flex: 1;
}

/* sheet */

.workspace {
  display: flex;
  flex: 1;
  gap: 3px;
  min-height: 0;
  padding-right: 3px;
}

.grid-view {
  flex: 1;
  min-width: 0;
  overflow: hidden;
  border-right: 1px solid #9b9b9b;
  border-bottom: 1px solid #9b9b9b;
}

.grid {
  border-collapse: separate;
  border-spacing: 0;
  table-layout: fixed;
  width: max-content;
  color: #000;
  font-family: "Liberation Sans", Arial, sans-serif;
  font-size: 13px;
  line-height: 16px;
}

.grid th, .grid td {
  width: 64px;
  height: 17px;
  padding: 0;
  border-right: 1px solid #d4d4d4;
  border-bottom: 1px solid #d4d4d4;
  background: #fff;
}

.grid th {
  background: #e6e6e6;
  border-color: #ababab;
  font-weight: 400;
}

.grid tr:first-child th {
  padding-top: 2px;
  border-bottom-color: #9b9b9b;
  line-height: 14px;
}

.grid tr > :first-child {
  width: 26px;
}

.grid .current {
  background: #d2d2d2;
  color: #217346;
}

.grid .corner {
  background: linear-gradient(135deg, transparent 50%, #b4b4b4 50%) 13px 4px / 9px 9px no-repeat #e6e6e6;
}

.grid .selected {
  outline: 2px solid #217346;
  outline-offset: -1px;
}

.vscroll {
  display: flex;
  flex-direction: column;
  gap: 1px;
  width: 15px;
  padding-top: 2px;
}

.vscroll button, .hscroll button {
  flex: none;
  width: 15px;
  height: 15px;
  border: 1px solid #ababab;
  background: #fff;
}

.vscroll .thumb, .hscroll .thumb {
  flex: 1;
  border: 1px solid #ababab;
  background: #fff;
}

.vscroll .thumb {
  margin-bottom: 17px;
}

/* sheet tabs */

.sheet-bar {
  display: flex;
  align-items: center;
  height: 28px;
  padding: 0 21px 1px 0;
}

.sheet-bar .nav {
  width: 29px;
  height: 20px;
}

.nav .arrow {
  background: #bdbdbd;
}

.sheet-bar .nav:first-child {
  margin-left: 15px;
}

.sheet {
  height: 21px;
}

.sheet.first {
  width: 59px;
  margin-left: 27px;
  border-left: 1px solid #9b9b9b;
}

.sheet.active {
  align-self: flex-start;
  width: 65px;
  height: 25px;
  border: solid #9b9b9b;
  border-width: 0 1px;
  box-shadow: inset 0 -2px #217346;
  background: #fff;
  color: #217346;
  font-weight: 700;
}

.add {
  margin-left: 32px;
}

.grip {
  width: 2px;
  height: 11px;
  margin-left: auto;
  margin-right: 15px;
  background: repeating-linear-gradient(#b0b0b0 0 2px, transparent 2px 4px);
}

.hscroll {
  display: flex;
  width: 730px;
  height: 15px;
  background: #dadada;
}

.hscroll .thumb {
  margin-right: 26px;
  margin-left: -1px;
}

/* status bar */

.status {
  display: flex;
  align-items: center;
  height: 22px;
  padding: 0 8px 1px 7px;
  border-top: 1px solid #c6c6c6;
  background: #f1f1f1;
  font-size: 11px;
}

.status .message {
  margin-right: auto;
}

.view {
  width: 38px;
  height: 21px;
}

.view.on {
  background: #c6c6c6;
}

.zoom-step {
  width: 16px;
  height: 16px;
  background: linear-gradient(#666, #666) center / 8px 2px no-repeat;
}

.zoom-step.plus {
  background: linear-gradient(#666, #666) center / 8px 2px no-repeat, linear-gradient(#666, #666) center / 2px 8px no-repeat;
}

.zoom {
  width: 100px;
  height: 12px;
  appearance: none;
  background: linear-gradient(#a6a6a6, #a6a6a6) center / 100% 1px no-repeat;
}

.zoom::-webkit-slider-thumb {
  width: 4px;
  height: 11px;
  appearance: none;
  background: #666;
}

.zoom-value {
  width: 39px;
  text-align: right;
}

/* floating panels */

.mini-toolbar {
  position: absolute;
  top: 160px;
  left: 61px;
  padding: 3px 2px 2px 3px;
  border: 1px solid #c6c6c6;
  background: #fff;
  box-shadow: 2px 2px 4px rgba(0, 0, 0, .15);
}

.mini-toolbar .row {
  height: 24px;
}

.menu {
  position: absolute;
  border: 1px solid #c6c6c6;
  background: #fff;
  box-shadow: 2px 2px 4px rgba(0, 0, 0, .15);
  color: #555;
}

.context-menu {
  top: 231px;
  left: 61px;
  width: 208px;
  padding: 1px 1px 0;
}

.item {
  justify-content: flex-start;
  width: 100%;
  height: 24px;
  padding: 0 9px 0 4px;
}

.item svg {
  width: 17px;
}

.item span {
  margin-left: 11px;
}

.item > span:first-child {
  margin-left: 28px;
}

.item .arrow {
  margin-left: auto;
}

.item:disabled {
  color: #b1b1b1;
}

.menu hr {
  height: 1px;
  margin: 0 0 1px 32px;
  border: 0;
  background: #e1e1e1;
}

.heading {
  height: 22px;
  padding: 3px 8px;
  background: #eaeaea;
  color: #666;
  font-weight: 700;
  white-space: nowrap;
}

.heading.with-icon {
  display: flex;
  align-items: center;
  gap: 13px;
  padding: 0 0 0 4px;
  background: linear-gradient(#eaeaea, #eaeaea) 24px 0 no-repeat;
}

.paste-row {
  display: flex;
  padding: 0 0 0 26px;
}

.paste-row button {
  flex: none;
  width: 30px;
  height: 30px;
}

.has-submenu {
  position: relative;
}

.item.open {
  height: 24px;
  padding: 0 7px 0 3px;
  border: 1px solid #c6c6c6;
  background: linear-gradient(#c6c6c6, #c6c6c6) right / 22px 100% no-repeat #fff;
}

.marker {
  position: absolute;
  top: 0;
  left: 8px;
  width: 119px;
  height: 23px;
  border: 2px solid #ed1c24;
  border-radius: 6px;
  box-shadow: 2px 2px 4px rgba(0, 0, 0, .35), inset 2px 2px 4px rgba(0, 0, 0, .2);
}

.submenu {
  top: 0;
  left: calc(100% + 1px);
  width: 135px;
  padding: 1px 1px 0;
}

.submenu .paste-row {
  flex-wrap: wrap;
  padding: 0;
}

.submenu hr {
  margin-left: 0;
}

.submenu .item > span {
  margin-left: 28px;
}

.paste-row .picked {
  position: relative;
  background: #b5b5b5;
}

.picked .marker {
  top: -6px;
  left: -2px;
  width: 34px;
  height: 39px;
}

.tooltip {
  position: absolute;
  top: 41px;
  left: 0;
  z-index: 1;
  padding: 3px 3px 4px;
  border: 1px solid #bebebe;
  background: #fff;
  color: #666;
  box-shadow: 2px 2px 3px rgba(0, 0, 0, .15);
}
```
FILE: grid.js
```js
var view = document.querySelector('.grid-view');
var table = document.querySelector('.grid');

function columnName(index) {
  var name = String.fromCharCode(65 + index % 26);
  return index < 26 ? name : String.fromCharCode(64 + Math.floor(index / 26)) + name;
}

function addCell(row, tag, text, className) {
  var cell = document.createElement(tag);
  cell.textContent = text;
  cell.className = className;
  row.appendChild(cell);
}

// fill the view; the last column may be partly visible and stays unnamed
function drawGrid() {
  var fit = (view.clientWidth - 26) / 64;
  var columns = Math.ceil(fit);
  var rows = Math.ceil(view.clientHeight / 17) - 1;
  table.textContent = '';

  var head = document.createElement('tr');
  addCell(head, 'th', '', 'corner');
  for (var c = 0; c < columns; c++) {
    addCell(head, 'th', c + 1 <= fit ? columnName(c) : '', c === 0 ? 'current' : '');
  }
  table.appendChild(head);

  for (var r = 1; r <= rows; r++) {
    var row = document.createElement('tr');
    addCell(row, 'th', r, r === 1 ? 'current' : '');
    for (c = 0; c < columns; c++) {
      addCell(row, 'td', '', r === 1 && c === 0 ? 'selected' : '');
    }
    table.appendChild(row);
  }
}

drawGrid();
window.addEventListener('resize', drawGrid);
```
